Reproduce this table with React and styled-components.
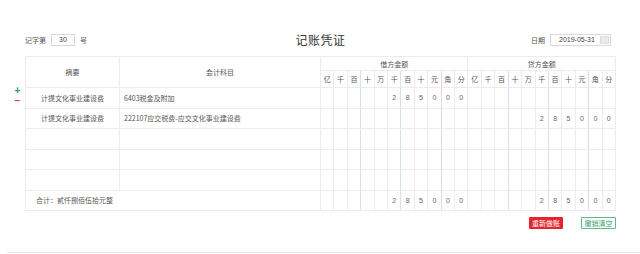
import React from 'react';
import styled, { createGlobalStyle } from 'styled-components';

const GlobalStyle = createGlobalStyle`
  body {
    margin: 0;
    background: #fff;
    font-family: "Noto Sans CJK SC", "Noto Sans", sans-serif;
    color: #555;
  }
`;

const Page = styled.div`
  margin-left: 7px;
  width: 633px;
  height: 253px;
  box-sizing: border-box;
  padding: 31px 24px 0 18px;
  border-bottom: 1px solid #e8e8e8;
`;

const TopBar = styled.div`
  display: grid;
  grid-template-columns: 1fr auto 1fr;
  align-items: center;
  height: 12px;
  margin-bottom: 13px;
`;

const Group = styled.div`
  display: flex;
  align-items: center;
  gap: 3px;
  font-size: 7px;
  color: #555;
  justify-self: ${({ $end }) => ($end ? 'end' : 'start')};
  padding-right: ${({ $end }) => ($end ? '3px' : '0')};
`;

const Title = styled.h1`
  margin: 0;
  font-size: 12px;
  font-weight: 400;
  color: #333;
  letter-spacing: 0.5px;
`;

const SmallInput = styled.div`
  width: ${({ $w }) => $w}px;
  height: 10px;
  border: 1px solid #d9d9d9;
  box-sizing: content-box;
  display: flex;
  align-items: center;
  justify-content: ${({ $left }) => ($left ? 'space-between' : 'center')};
  padding: ${({ $left }) => ($left ? '0 1px 0 8px' : '0')};
  font-family: "Liberation Sans", Arial, sans-serif;
  font-size: 7px;
  color: #444;
  margin: 0 2px;
`;

const CalBtn = styled.span`
  width: 9px;
  height: 8px;
  background: #eaeaea;
  border: 1px solid #dcdcdc;
  box-sizing: border-box;
`;

const Body = styled.div`
  display: flex;
  margin-left: -18px;
`;

const Gutter = styled.div`
  width: 18px;
  padding-top: 31px;
  display: flex;
  flex-direction: column;
  align-items: center;
  gap: 2px;
  padding-left: 3px;
  box-sizing: border-box;
`;

const Sign = styled.span`
  font-family: "Liberation Sans", Arial, sans-serif;
  font-size: 10px;
  line-height: 8px;
  font-weight: 700;
  color: ${({ $minus }) => ($minus ? '#e0393e' : '#2a9d5c')};
`;

const Table = styled.table`
  width: 591px;
  border-collapse: collapse;
  table-layout: fixed;
  font-size: 7px;
  color: #555;
`;

const lineColor = (line) =>
  line === 'blue' ? '#cfe2f6' : line === 'red' ? '#f3d2d2' : '#ececec';

const Th = styled.th`
  font-weight: 400;
  border: 1px solid #ececec;
  border-right-color: ${({ $line }) => lineColor($line)};
  height: ${({ $h }) => $h || 14}px;
  padding: 0;
  text-align: center;
  color: #555;
`;

const Td = styled.td`
  border: 1px solid #ececec;
  border-right-color: ${({ $line }) => lineColor($line)};
  height: 19.5px;
  padding: 0 ${({ $pad }) => $pad || 0}px;
  text-align: ${({ $align }) => $align || 'center'};
  font-family: ${({ $num }) =>
    $num ? '"Liberation Sans", Arial, sans-serif' : 'inherit'};
  color: ${({ $num }) => ($num ? '#666' : '#555')};
  white-space: nowrap;
  overflow: hidden;
`;

const Actions = styled.div`
  display: flex;
  justify-content: flex-end;
  gap: 18px;
  margin-top: 6px;
`;

const Button = styled.button`
  height: 12px;
  width: ${({ $w }) => $w}px;
  padding: 0;
  font-family: inherit;
  font-size: 7px;
  line-height: 10px;
  border: 1px solid ${({ $danger }) => ($danger ? '#e4252b' : '#58b98a')};
  background: ${({ $danger }) => ($danger ? '#e4252b' : '#fff')};
  color: ${({ $danger }) => ($danger ? '#fff' : '#3c9d6e')};
  border-radius: 1px;
`;

const digitLabels = ['亿', '千', '百', '十', '万', '千', '百', '十', '元', '角', '分'];
const lineFor = (i) => (i === 2 || i === 5 ? 'blue' : i === 8 ? 'red' : undefined);

const amount = ['', '', '', '', '', '2', '8', '5', '0', '0', '0'];
const empty = Array(11).fill('');

const rows = [
  { summary: '计提文化事业建设费', subject: '6403税金及附加', debit: amount, credit: empty },
  { summary: '计提文化事业建设费', subject: '222107应交税费-应交文化事业建设费', debit: empty, credit: amount },
  { summary: '', subject: '', debit: empty, credit: empty },
  { summary: '', subject: '', debit: empty, credit: empty },
  { summary: '', subject: '', debit: empty, credit: empty },
];

function Digits({ values }) {
  return values.map((v, i) => (
    <Td key={i} $num $line={lineFor(i)}>{v}</Td>
  ));
}

export default function App() {
  return (
    <>
      <GlobalStyle />
      <Page>
        <TopBar>
          <Group>
            记字第<SmallInput $w={22}>30</SmallInput>号
          </Group>
          <Title>记账凭证</Title>
          <Group $end>
            日期
            <SmallInput $w={50} $left>
              2019-05-31<CalBtn />
            </SmallInput>
          </Group>
        </TopBar>

        <Body>
          <Gutter>
            <Sign>+</Sign>
            <Sign $minus>−</Sign>
          </Gutter>
          <Table>
            <colgroup>
              <col style={{ width: 94 }} />
              <col style={{ width: 201 }} />
              {Array.from({ length: 22 }).map((_, i) => <col key={i} />)}
            </colgroup>
            <thead>
              <tr>
                <Th rowSpan={2}>摘要</Th>
                <Th rowSpan={2}>会计科目</Th>
                <Th colSpan={11} $h={13}>借方金额</Th>
                <Th colSpan={11} $h={13}>贷方金额</Th>
              </tr>
              <tr>
                {[...digitLabels, ...digitLabels].map((d, i) => (
                  <Th key={i} $h={16} $line={lineFor(i % 11)}>{d}</Th>
                ))}
              </tr>
            </thead>
            <tbody>
              {rows.map((r, i) => (
                <tr key={i}>
                  <Td>{r.summary}</Td>
                  <Td $align="left" $pad={4}>{r.subject}</Td>
                  <Digits values={r.debit} />
                  <Digits values={r.credit} />
                </tr>
              ))}
              <tr>
                <Td colSpan={2} $align="left" $pad={10}>合计：贰仟捌佰伍拾元整</Td>
                <Digits values={amount} />
                <Digits values={amount} />
              </tr>
            </tbody>
          </Table>
        </Body>

        <Actions>
          <Button $danger $w={34}>重新做账</Button>
          <Button $w={35}>撤销清空</Button>
        </Actions>
      </Page>
    </>
  );
}
